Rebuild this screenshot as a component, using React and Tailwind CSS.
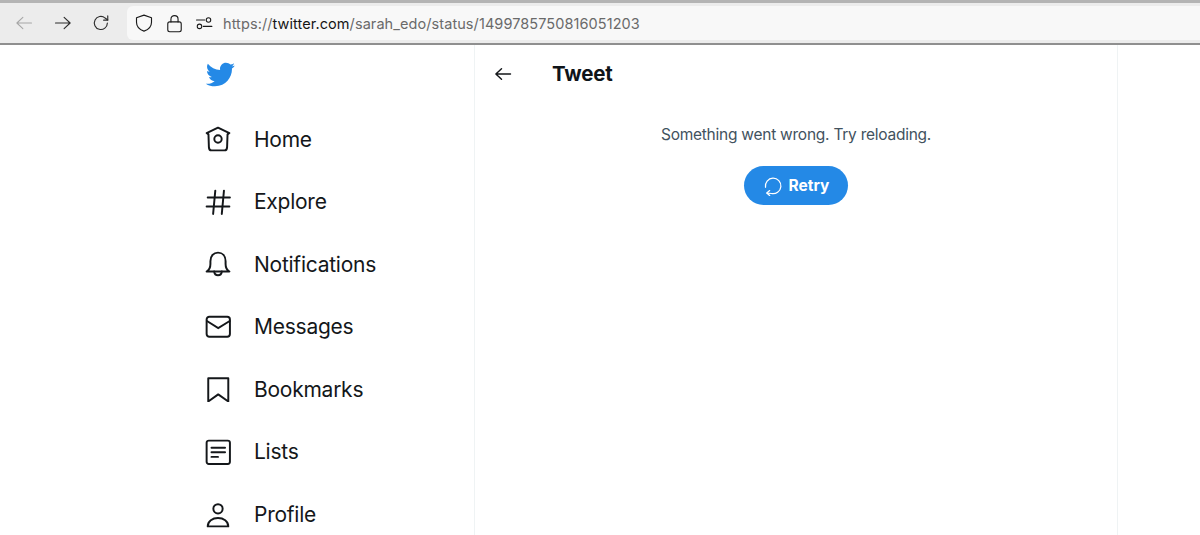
const font = { fontFamily: "Inter, 'Liberation Sans', sans-serif" };

const icons = {
  home: (
    <>
      <path d="M12 1.5 L22.5 6.5 L20.8 7.7 L20.4 19.5 Q20.3 22.5 18 22.5 L6 22.5 Q3.7 22.5 3.6 19.5 L3.2 7.7 L1.5 6.5 Z" strokeLinejoin="round" />
      <circle cx="12" cy="12" r="3.4" />
    </>
  ),
  explore: <path d="M9.5 1.5 L7.5 23 M17.5 1.5 L15.5 23 M2.5 7.8 H23 M1.5 16.2 H22.5" />,
  bell: (
    <>
      <path d="M1.5 19 Q5 17 5 12 L5 9.5 C5 4.5 8 1.5 12 1.5 C16 1.5 19 4.5 19 9.5 L19 12 Q19 17 22.5 19 Z" strokeLinejoin="round" />
      <path d="M8.5 19 C9 23.5 15 23.5 15.5 19" />
    </>
  ),
  mail: (
    <>
      <rect x="1.5" y="2.5" width="21.5" height="18.5" rx="2.5" />
      <path d="M1.8 6.5 L12.2 13 L22.8 6.5" />
    </>
  ),
  bookmark: <path d="M3 2 H21.5 V23.5 L12.2 17 L3 23.5 Z" strokeLinejoin="round" />,
  list: (
    <>
      <rect x="1.5" y="1.5" width="21.5" height="21.5" rx="2" />
      <path d="M6 8 H18.5 M6 12.3 H18.5 M6 16.5 H12" />
    </>
  ),
  profile: (
    <>
      <circle cx="12" cy="6.3" r="4.3" />
      <path d="M2.5 22.5 C2.5 17.5 7 14.8 12 14.8 C17 14.8 21.5 17.5 21.5 22.5 Z" strokeLinejoin="round" />
    </>
  ),
};

const navItems = [
  ["Home", "home"],
  ["Explore", "explore"],
  ["Notifications", "bell"],
  ["Messages", "mail"],
  ["Bookmarks", "bookmark"],
  ["Lists", "list"],
  ["Profile", "profile"],
];

function Stroke({ size = 24, view = "0 0 24 24", width = 2, className = "", children }) {
  return (
    <svg
      width={size}
      height={size}
      viewBox={view}
      fill="none"
      stroke="currentColor"
      strokeWidth={width}
      strokeLinecap="round"
      className={className}
    >
      {children}
    </svg>
  );
}

function Toolbar() {
  return (
    <div className="flex h-[45px] items-center border-t-[3px] border-b-2 border-t-[#b4b4b4] border-b-[#8f8f8f] bg-[#ececec]">
      <div className="flex w-[127px] shrink-0 items-center pl-[15px]">
        <Stroke size={18} width={1.4} className="text-[#a6a6a6]">
          <path d="M22 12 H2.5 M10.5 4.5 L2.5 12 L10.5 19.5" strokeLinejoin="round" />
        </Stroke>
        <Stroke size={18} width={1.5} className="ml-[21px] text-[#2b2b2b]">
          <path d="M2 12 H21.5 M13.5 4.5 L21.5 12 L13.5 19.5" strokeLinejoin="round" />
        </Stroke>
        <Stroke size={18} width={1.5} className="ml-[20px] text-[#2b2b2b]">
          <path d="M20.5 12 A8.7 8.7 0 1 1 17.5 5.4 L21 8" />
          <path d="M21 2.5 V8.2 H15.5" strokeLinejoin="round" />
        </Stroke>
      </div>
      <div className="flex h-[34px] flex-1 items-center rounded-l-md bg-[#f8f8f8] pl-[8px]">
        <Stroke size={18} width={1.5} className="text-[#1a1a1a]">
          <path d="M12 1.5 L22 5 V11 C22 17 17.5 21 12 22.8 C6.5 21 2 17 2 11 V5 Z" strokeLinejoin="round" />
        </Stroke>
        <Stroke size={19} width={1.4} className="ml-[12px] text-[#1a1a1a]">
          <rect x="3.5" y="10" width="17" height="12.5" rx="2.5" />
          <path d="M7.5 10 V6.5 C7.5 0.5 16.5 0.5 16.5 6.5 V10" />
        </Stroke>
        <Stroke size={18} width={1.4} className="ml-[11px] text-[#1a1a1a]">
          <path d="M2 8 H13 M11 16.5 H22.5" />
          <circle cx="18" cy="8" r="3" />
          <circle cx="6" cy="16.5" r="3" />
        </Stroke>
        <span className="ml-[10px] mt-[1px] text-[14.5px] tracking-[0.08px] text-[#6a6a6a]">
          https://<span className="text-[#151515]">twitter.com</span>/sarah_edo/status/1499785750816051203
        </span>
      </div>
    </div>
  );
}

function Sidebar() {
  return (
    <div className="w-[475px] shrink-0 border-r border-[#eff3f4] pl-[205px] pt-[14px]">
      <svg width="30" height="31" viewBox="0.3 0 23.4 24" fill="#2489e6" className="mb-[33px]">
        <path d="M23.643 4.937c-.835.37-1.732.62-2.675.77.962-.576 1.7-1.49 2.048-2.578-.9.534-1.897.922-2.958 1.13-.85-.904-2.06-1.47-3.4-1.47-2.572 0-4.658 2.086-4.658 4.66 0 .364.042.718.12 1.06-3.873-.195-7.304-2.05-9.602-4.868-.4.69-.63 1.49-.63 2.342 0 1.616.823 3.043 2.072 3.878-.764-.025-1.482-.234-2.11-.583v.06c0 2.257 1.605 4.14 3.737 4.568-.392.106-.803.162-1.227.162-.3 0-.593-.028-.877-.082.593 1.85 2.313 3.198 4.352 3.234-1.595 1.25-3.604 1.995-5.786 1.995-.376 0-.747-.022-1.112-.065 2.062 1.323 4.51 2.093 7.14 2.093 8.57 0 13.255-7.098 13.255-13.254 0-.2-.005-.402-.014-.602.91-.658 1.7-1.477 2.323-2.41z" />
      </svg>
      <nav className="flex flex-col gap-[30.6px]">
        {navItems.map(([label, icon]) => (
          <div key={label} className="flex h-8 items-center gap-[23px] text-[#14171a]">
            <Stroke size={26} width={1.8}>{icons[icon]}</Stroke>
            <span className="mt-[1px] text-[21px] leading-8 tracking-[-0.25px]">{label}</span>
          </div>
        ))}
      </nav>
    </div>
  );
}

function TweetColumn() {
  return (
    <div className="w-[643px] shrink-0 border-r border-[#eff3f4]">
      <div className="flex h-[58px] items-center pl-[19px]">
        <Stroke size={18} width={1.9} className="text-[#14171a]">
          <path d="M22 12 H2.5 M10 5 L2.5 12 L10 19" strokeLinejoin="round" />
        </Stroke>
        <h1 className="ml-[40px] mt-[1px] text-[20.5px] font-bold tracking-[-0.2px] text-[#0f1419]">Tweet</h1>
      </div>
      <div className="mt-[21px] flex flex-col items-center">
        <p className="text-[15.5px] leading-[22px] tracking-[-0.25px] text-[#42525e]">Something went wrong. Try reloading.</p>
        <button className="mt-[20px] flex h-[39px] w-[104px] items-center justify-center gap-[6px] rounded-full bg-[#2489e6] text-[15.5px] font-bold text-white">
          <Stroke size={20} width={1.5}>
            <path d="M3 13.5 A9.3 9.3 0 1 1 10 21 L5 20.5" />
            <path d="M8 17.5 L4.5 20.5 L8 23.5" strokeLinejoin="round" />
          </Stroke>
          Retry
        </button>
      </div>
    </div>
  );
}

export default function App() {
  return (
    <div className="h-[535px] w-[1200px] overflow-hidden bg-white" style={font}>
      <Toolbar />
      <div className="flex h-[490px]">
        <Sidebar />
        <TweetColumn />
      </div>
    </div>
  );
}
